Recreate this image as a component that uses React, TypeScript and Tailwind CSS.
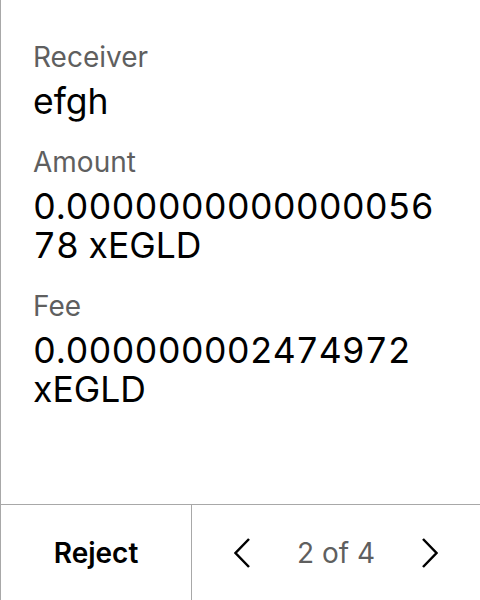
import React from "react";

function Field({ label, value }: { label: string; value: string }) {
  return (
    <div className="flex flex-col">
      <div className="text-[28px] leading-[34px] text-[#5f5f5f]">{label}</div>
      <div className="text-[35.5px] leading-[39px] text-black tabular-nums [overflow-wrap:anywhere] mt-[8px]">{value}</div>
    </div>
  );
}

export default function App() {
  return (
    <div
      className="w-[480px] h-[600px] bg-white flex flex-col border-l border-[#a8a8a8]"
      style={{ fontFamily: "Inter, 'Noto Sans', sans-serif" }}
    >
      <div className="flex-1 flex flex-col gap-[24px] pl-[32px] pr-[32px] pt-[40px]">
        <Field label="Receiver" value="efgh" />
        <Field label="Amount" value="0.000000000000005678 xEGLD" />
        <Field label="Fee" value="0.000000002474972 xEGLD" />
      </div>
      <div className="h-[96px] flex border-t border-[#a8a8a8]">
        <button className="w-[191px] h-full border-r border-[#a8a8a8] flex items-center justify-center text-[28px] font-semibold text-black">
          Reject
        </button>
        <div className="flex-1 flex items-center justify-center gap-[47px]">
          <svg width="16" height="30" viewBox="0 0 16 30" fill="none">
            <path d="M15 1 L1.5 15 L15 29" stroke="black" strokeWidth="2.5" />
          </svg>
          <span className="text-[28px] text-[#5f5f5f]">2 of 4</span>
          <svg width="16" height="30" viewBox="0 0 16 30" fill="none">
            <path d="M1 1 L14.5 15 L1 29" stroke="black" strokeWidth="2.5" />
          </svg>
        </div>
      </div>
    </div>
  );
}
